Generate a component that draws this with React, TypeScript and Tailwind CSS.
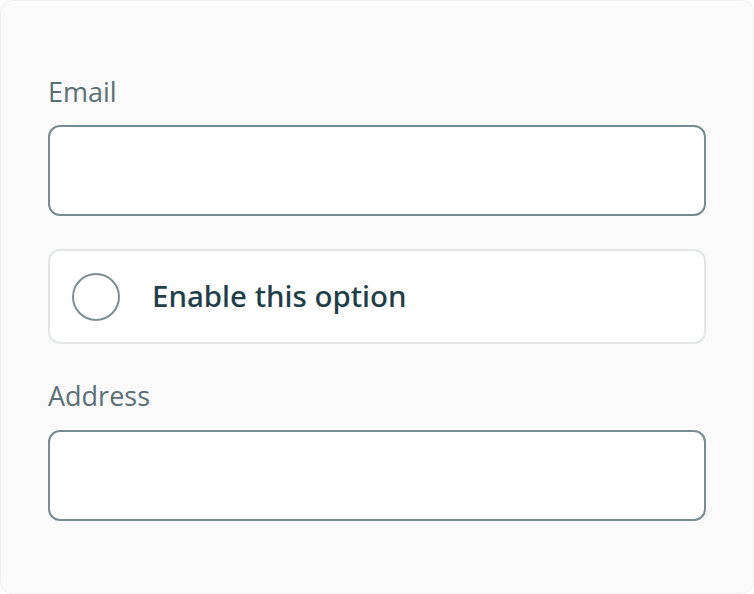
import React from "react";

export default function App() {
  return (
    <div className="w-[754px] h-[594px] bg-white" style={{ fontFamily: "'Open Sans', 'Noto Sans', sans-serif" }}>
      <div className="w-[754px] h-[594px] box-border bg-[#fafafa] border border-[#efefef] rounded-[12px] px-[47px] pt-[75px] flex flex-col">
        <label className="block text-[27px] leading-[32px] text-[#5b6f75]">Email</label>
        <input className="mt-[17px] h-[91px] w-full box-border bg-white border-2 border-[#7a8b8f] rounded-[12px] outline-none" />
        <div className="mt-[33px] h-[95px] w-full box-border bg-white border-2 border-[#e4e6e6] rounded-[12px] flex items-center pl-[22px]">
          <div className="w-[48px] h-[48px] rounded-full border-2 border-[#7f8e92] bg-white box-border" />
          <span className="ml-[32px] text-[29.5px] font-medium text-[#213d47]" style={{ fontFamily: "'Noto Sans', 'Open Sans', sans-serif" }}>Enable this option</span>
        </div>
        <label className="mt-[36px] block text-[27px] leading-[32px] text-[#5b6f75]">Address</label>
        <input className="mt-[18px] h-[91px] w-full box-border bg-white border-2 border-[#7a8b8f] rounded-[12px] outline-none" />
      </div>
    </div>
  );
}
